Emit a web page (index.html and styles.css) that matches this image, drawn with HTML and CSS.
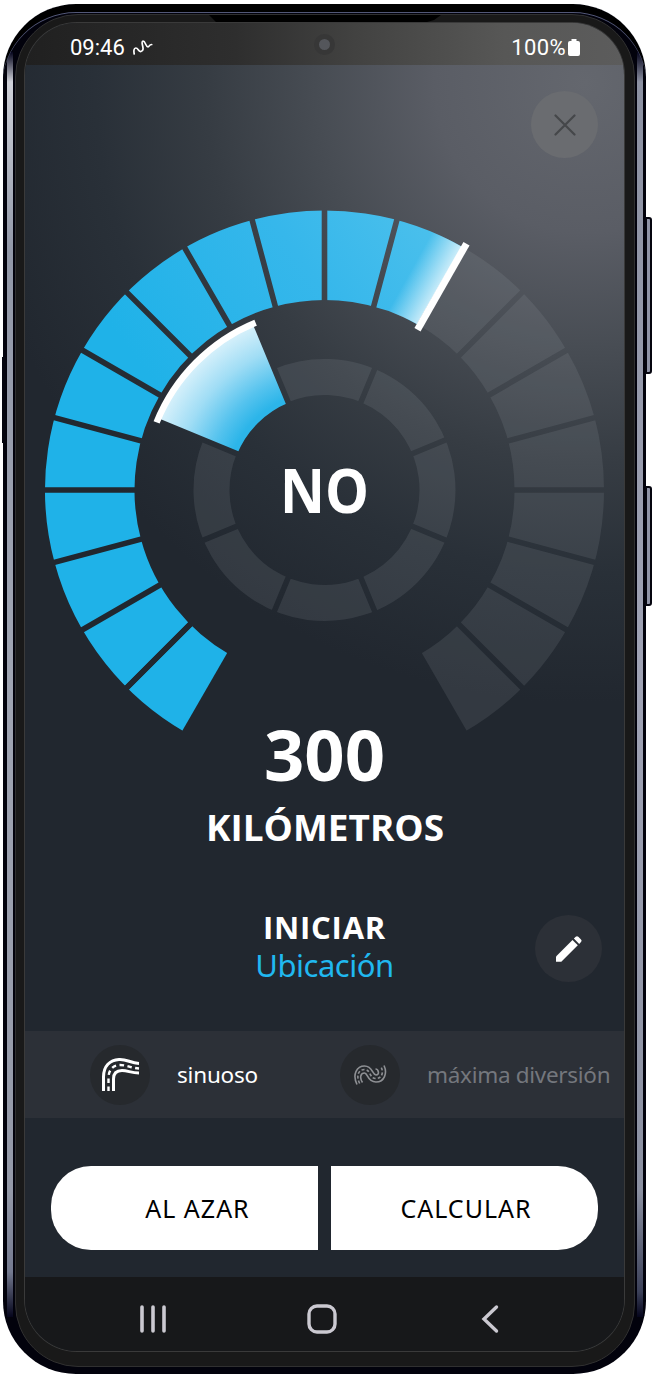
FILE: index.html
```
<!DOCTYPE html>
<html lang="es">
<head>
    <meta charset="UTF-8">
    <meta name="viewport" content="width=device-width, initial-scale=1.0">
    <title>Ruta aleatoria</title>
    <link rel="stylesheet" href="styles.css">
</head>
<body>

<div class="phone">
    <!-- Side keys -->
    <div class="key key-volume"></div>
    <div class="key key-power"></div>
    <div class="key key-left"></div>

    <div class="bezel">
        <div class="earpiece"></div>

        <div class="screen">
            <!-- Status bar -->
            <div class="status-bar">
                <div class="status-left">
                    <span class="clock">09:46</span>
                    <svg width="20" height="18" viewBox="0 0 20 18" fill="none" stroke="#fff" stroke-width="1.700" stroke-linecap="round" stroke-linejoin="round">
                        <path d="M1.200 16C.6 13 .8 10 2.800 10C5.500 10 5 14 8 13.500C13 12.500 7 4 9.800 3.200C12.500 2.600 12.500 9 15 8.800C16.500 8.700 16 6.500 18.700 6.500"/>
                    </svg>
                </div>
                <div class="status-right">
                    <span class="battery-text">100%</span>
                    <svg width="12" height="17" viewBox="0 0 12 17" fill="#fff">
                        <path d="M3.500 0h5v2H10a2 2 0 0 1 2 2v11a2 2 0 0 1-2 2H2a2 2 0 0 1-2-2V4a2 2 0 0 1 2-2h1.500z"/>
                    </svg>
                </div>
                <div class="camera"></div>
            </div>

            <!-- Close -->
            <div class="top-row">
                <button class="round-button close-button" aria-label="Cerrar">
                    <svg width="22" height="22" viewBox="0 0 22 22" stroke="#45474a" stroke-width="2.200" stroke-linecap="round">
                        <path d="M1.500 1.500l19 19M20.500 1.500l-19 19"/>
                    </svg>
                </button>
            </div>

            <!-- Distance and direction gauge -->
            <svg class="gauge" width="599" height="650" viewBox="25 200 599 650">
                <defs>
                    <mask id="outer-gaps" maskUnits="userSpaceOnUse" x="25" y="200" width="599" height="650">
                        <rect x="25" y="200" width="599" height="650" fill="#fff"/>
                        <g stroke="#000" stroke-width="5.600">
                            <path d="M324.500 190V490M24.500 490H624.500"/>
                            <path d="M324.500 190V490M24.500 490H624.500" transform="rotate(15 324.500 490)"/>
                            <path d="M324.500 190V490M24.500 490H624.500" transform="rotate(30 324.500 490)"/>
                            <path d="M324.500 190V490M24.500 490H624.500" transform="rotate(-15 324.500 490)"/>
                            <path d="M324.500 190V490M24.500 490H624.500" transform="rotate(-30 324.500 490)"/>
                            <path d="M324.500 190V790M24.500 490H324.500" transform="rotate(-45 324.500 490)"/>
                            <path d="M324.500 190V790" transform="rotate(45 324.500 490)"/>
                            <path d="M324.500 490V790" transform="rotate(30 324.500 490)"/>
                            <path d="M324.500 490V790" transform="rotate(-30 324.500 490)"/>
                        </g>
                    </mask>
                    <mask id="inner-gaps" maskUnits="userSpaceOnUse" x="130" y="290" width="390" height="390">
                        <rect x="130" y="290" width="390" height="390" fill="#fff"/>
                        <g stroke="#000" stroke-width="5.600">
                            <path d="M324.500 290V690M124.500 490H524.500" transform="rotate(22.500 324.500 490)"/>
                            <path d="M324.500 290V690M124.500 490H524.500" transform="rotate(-22.500 324.500 490)"/>
                        </g>
                    </mask>
                    <linearGradient id="blue" gradientUnits="userSpaceOnUse" x1="180" y1="420" x2="440" y2="230">
                        <stop offset="0" stop-color="#1fb2e8"/>
                        <stop offset=".6" stop-color="#36b7eb"/>
                        <stop offset="1" stop-color="#4bc0ec"/>
                    </linearGradient>
                    <linearGradient id="fade" gradientUnits="userSpaceOnUse" x1="410" y1="272" x2="444" y2="291">
                        <stop offset="0" stop-color="#fff" stop-opacity="0"/>
                        <stop offset="1" stop-color="#fff" stop-opacity=".85"/>
                    </linearGradient>
                    <radialGradient id="cone" gradientUnits="userSpaceOnUse" cx="324.500" cy="490" r="180">
                        <stop offset=".55" stop-color="#2cb5e9"/>
                        <stop offset=".66" stop-color="#55c3ee"/>
                        <stop offset=".83" stop-color="#a0ddf5"/>
                        <stop offset="1" stop-color="#d8f1fb"/>
                    </radialGradient>
                </defs>

                <g fill="none" mask="url(#outer-gaps)">
                    <path d="M441.880 286.700A234.750 234.750 0 0 1 441.880 693.300" stroke="#a0abb0" stroke-opacity=".14" stroke-width="89.500"/>
                    <path d="M207.120 693.300A234.750 234.750 0 0 1 441.880 286.700" stroke="url(#blue)" stroke-width="89.500"/>
                    <path d="M385.260 263.250A234.750 234.750 0 0 1 441.880 286.700" stroke="url(#fade)" stroke-width="89.500"/>
                </g>
                <path d="M417.500 329.700L466.500 243.700" stroke="#fff" stroke-width="7"/>

                <g fill="none" mask="url(#inner-gaps)">
                    <path d="M281.260 385.600A113 113 0 1 1 220.100 446.760" stroke="#a0abb0" stroke-opacity=".14" stroke-width="36"/>
                    <path d="M197.460 437.380A137.500 137.500 0 0 1 271.880 362.960" stroke="url(#cone)" stroke-width="86"/>
                </g>
                <path d="M156.600 422.400A181 181 0 0 1 255.600 322.700" fill="none" stroke="#fff" stroke-width="6.500"/>

                <g class="gauge-text" text-anchor="middle">
                    <text x="324.500" y="513" font-size="61" textLength="89" lengthAdjust="spacingAndGlyphs">NO</text>
                    <text x="324.500" y="781" font-size="70" textLength="121" lengthAdjust="spacingAndGlyphs">300</text>
                    <text x="325" y="841" font-size="36.500" textLength="238" lengthAdjust="spacingAndGlyphs">KILÓMETROS</text>
                </g>
            </svg>

            <!-- Start point -->
            <div class="start">
                <div class="start-text">
                    <div class="start-title">INICIAR</div>
                    <div class="start-place">Ubicación</div>
                </div>
                <button class="round-button edit-button" aria-label="Editar">
                    <svg width="28" height="28" viewBox="0 0 28 28" fill="#fff">
                        <path d="M1 21.500L17.500 5l5.300 5.300L6.300 26.800H1z"/>
                        <path d="M18.900 3.600l1.800-1.800q1.300-1.300 2.600 0l2.700 2.700q1.300 1.300 0 2.600l-1.800 1.800z"/>
                    </svg>
                </button>
            </div>

            <!-- Route style -->
            <div class="styles-row">
                <div class="style-icon">
                    <svg width="40" height="36" viewBox="0 0 40 36" fill="none" stroke="#fff" stroke-width="3">
                        <path d="M3.500 34V20C3.500 9 10 3 19 2.500C27 2 30 6 39 6.500"/>
                        <path d="M13.500 34V22C13.500 16 17 13.500 22 13.500C28 13.500 31 16 39 16"/>
                        <path d="M8.500 34V21C8.500 12.500 13.500 8 20 8C27 8 31 11 39 11.500" stroke-width="2.400" stroke-dasharray="4.500 3.500"/>
                    </svg>
                </div>
                <span class="style-name">sinuoso</span>
                <div class="style-icon style-icon-next">
                    <svg width="34" height="22" viewBox="0 0 34 22" fill="none" stroke="#8e9094" stroke-width="1.600">
                        <path d="M4 20.500C-1 10 4 2 11.500 2C20 2 19 11 23 11C27 11 25.500 5 22.500 5"/>
                        <path d="M9.500 18.500C6 13 8 9 11.500 9C15 9 14 18 23 18C31.500 18 34.500 9 31 1.500"/>
                        <path d="M6.700 19.500C2.500 11 6 5.500 11.500 5.500C18 5.500 16 14.500 23 14.500C29 14.500 31 8 28 3" stroke-dasharray="3 2"/>
                    </svg>
                </div>
                <span class="style-name style-name-next">máxima diversión</span>
            </div>

            <!-- Actions -->
            <div class="actions">
                <button class="action action-left">AL AZAR</button>
                <button class="action action-right">CALCULAR</button>
            </div>

            <!-- Android navigation -->
            <div class="nav-bar">
                <svg width="28" height="30" viewBox="0 0 28 30" stroke="#cbc9d1" stroke-width="3.600" stroke-linecap="round">
                    <path d="M3 3v24M14 3v24M25 3v24"/>
                </svg>
                <svg class="nav-home" width="30" height="30" viewBox="0 0 30 30" fill="none" stroke="#cbc9d1" stroke-width="3.400">
                    <rect x="2" y="2" width="26" height="26" rx="8"/>
                </svg>
                <svg width="18" height="30" viewBox="0 0 18 30" fill="none" stroke="#cbc9d1" stroke-width="3.400" stroke-linecap="round">
                    <path d="M15.500 3L3 15l12.500 12"/>
                </svg>
            </div>
        </div>
    </div>
</div>

</body>
</html>
```

FILE: styles.css
```
body {
    margin: 0;
    background-color: #fff;
    font-family: "Noto Sans", "Open Sans", sans-serif;
    overflow: hidden;
}
button {
    border: none;
    padding: 0;
    font-family: inherit;
    cursor: pointer;
}
.phone {
    position: relative;
    box-sizing: border-box;
    width: 643px;
    height: 1370px;
    margin: 4px 0 0 3px;
    padding: 10px 11px 7px 12px;
    border-radius: 73px;
    background:
        linear-gradient(#05051c, #d0d2d9 30px, #9298a8 200px, #a0a5b3 50%, #9499a8 90%, #747a90 1220px, #05051c) 4px 48px / 6px 1265px no-repeat,
        linear-gradient(#05051c, #8c91a2 30px, #a0a3b5 50%, #8b90a1 90%, #3b4058 1240px, #05051c) 634px 48px / 6px 1265px no-repeat,
        #02020c;
    box-shadow: inset 0 9px 0 -1px #000, inset 0 10px 0 -1px #525777;
}
.key {
    position: absolute;
    box-sizing: border-box;
    background-color: #8f93a6;
    border: 2px solid #05050f;
}
.key-volume {
    left: 642px;
    top: 213px;
    width: 7px;
    height: 157px;
    border-radius: 0 3px 3px 0;
}
.key-power {
    left: 642px;
    top: 482px;
    width: 7px;
    height: 120px;
    border-radius: 0 3px 3px 0;
}
.key-left {
    left: -1px;
    top: 353px;
    width: 2px;
    height: 86px;
}
.bezel {
    position: relative;
    box-sizing: border-box;
    height: 1353px;
    padding: 8px 10px 15px 9px;
    border: 1px solid #303030;
    border-radius: 63px;
    background-color: #191919;
}
.earpiece {
    position: absolute;
    left: 193px;
    top: 0;
    width: 232px;
    height: 7px;
    background-color: #000;
    clip-path: polygon(0 0, 100% 0, 97% 70%, 94% 100%, 3% 100%);
}
.screen {
    display: flex;
    flex-direction: column;
    height: 1328px;
    overflow: hidden;
    border-radius: 52px;
    background: radial-gradient(circle at 560px 60px, #64676e 0, #5a5d65 150px, #474c53 270px, #363c43 380px, #293038 490px, #21272f 620px);
    box-shadow: 0 0 0 1px #3a3a3a;
}

/* Status bar */
.status-bar {
    position: relative;
    display: flex;
    flex: none;
    align-items: center;
    justify-content: space-between;
    box-sizing: border-box;
    height: 42px;
    padding: 6px 44px 0 45px;
    background: linear-gradient(90deg, #202020, #2e2e2e 35%, #424241 55%, #575756 80%, #5c5c5c);
    color: #fff;
    font-family: Roboto, sans-serif;
    font-size: 22px;
}
.status-left,
.status-right {
    display: flex;
    align-items: center;
}
.status-left {
    gap: 8px;
}
.status-right {
    gap: 2px;
}
.battery-text {
    letter-spacing: 0.4px;
}
.camera {
    position: absolute;
    left: 289px;
    top: 11px;
    width: 11px;
    height: 11px;
    border: 5px solid #373737;
    border-radius: 50%;
    background-color: #54565b;
}

/* Round buttons */
.top-row {
    display: flex;
    flex: none;
    justify-content: flex-end;
    box-sizing: border-box;
    height: 135px;
    padding: 26px 26px 0 0;
}
.round-button {
    display: flex;
    align-items: center;
    justify-content: center;
    width: 67px;
    height: 67px;
    border-radius: 50%;
}
.close-button {
    background-color: #6a6c70;
}
.edit-button {
    justify-self: end;
    margin-top: 7px;
    background-color: #2c3037;
}

.gauge {
    display: block;
    flex: none;
}
.gauge-text {
    fill: #fff;
    font-family: "Open Sans", sans-serif;
    font-weight: bold;
}

/* Start point */
.start {
    display: grid;
    flex: none;
    grid-template-columns: 1fr 240px 1fr;
    align-items: start;
    box-sizing: border-box;
    height: 181px;
    padding: 58px 22px 0 22px;
}
.start-text {
    grid-column: 2;
    text-align: center;
    color: #fff;
}
.start-title {
    font-family: "Open Sans", sans-serif;
    font-size: 31px;
    font-weight: bold;
    line-height: 38px;
    letter-spacing: 0.8px;
}
.start-place {
    color: #20b8f0;
    font-size: 31px;
    line-height: 38px;
    letter-spacing: -0.5px;
}

/* Route style */
.styles-row {
    display: flex;
    flex: none;
    align-items: center;
    height: 87px;
    padding-left: 65px;
    background-color: #2c3037;
    white-space: nowrap;
}
.style-icon {
    display: flex;
    flex: none;
    align-items: center;
    justify-content: center;
    width: 60px;
    height: 60px;
    border-radius: 50%;
    background-color: #26292d;
}
.style-name {
    width: 163px;
    margin-left: 27px;
    color: #fff;
    font-size: 22.5px;
    letter-spacing: -0.2px;
}
.style-name-next {
    color: #74777d;
    letter-spacing: -0.3px;
}

/* Actions */
.actions {
    display: grid;
    grid-template-columns: 1fr 1fr;
    flex: none;
    gap: 13px;
    box-sizing: border-box;
    height: 159px;
    padding: 48px 26px 27px 26px;
}
.action {
    background-color: #fff;
    color: #000;
    font-size: 25px;
    letter-spacing: 1px;
}
.action-left {
    padding-left: 26px;
    border-radius: 40px 0 0 40px;
}
.action-right {
    padding-left: 3px;
    border-radius: 0 40px 40px 0;
}

/* Android navigation */
.nav-bar {
    display: flex;
    flex: 1;
    align-items: flex-start;
    justify-content: space-between;
    padding: 27px 125px 0 114px;
    background-color: #17181a;
}
.nav-home {
    margin-right: 5px;
}
```
